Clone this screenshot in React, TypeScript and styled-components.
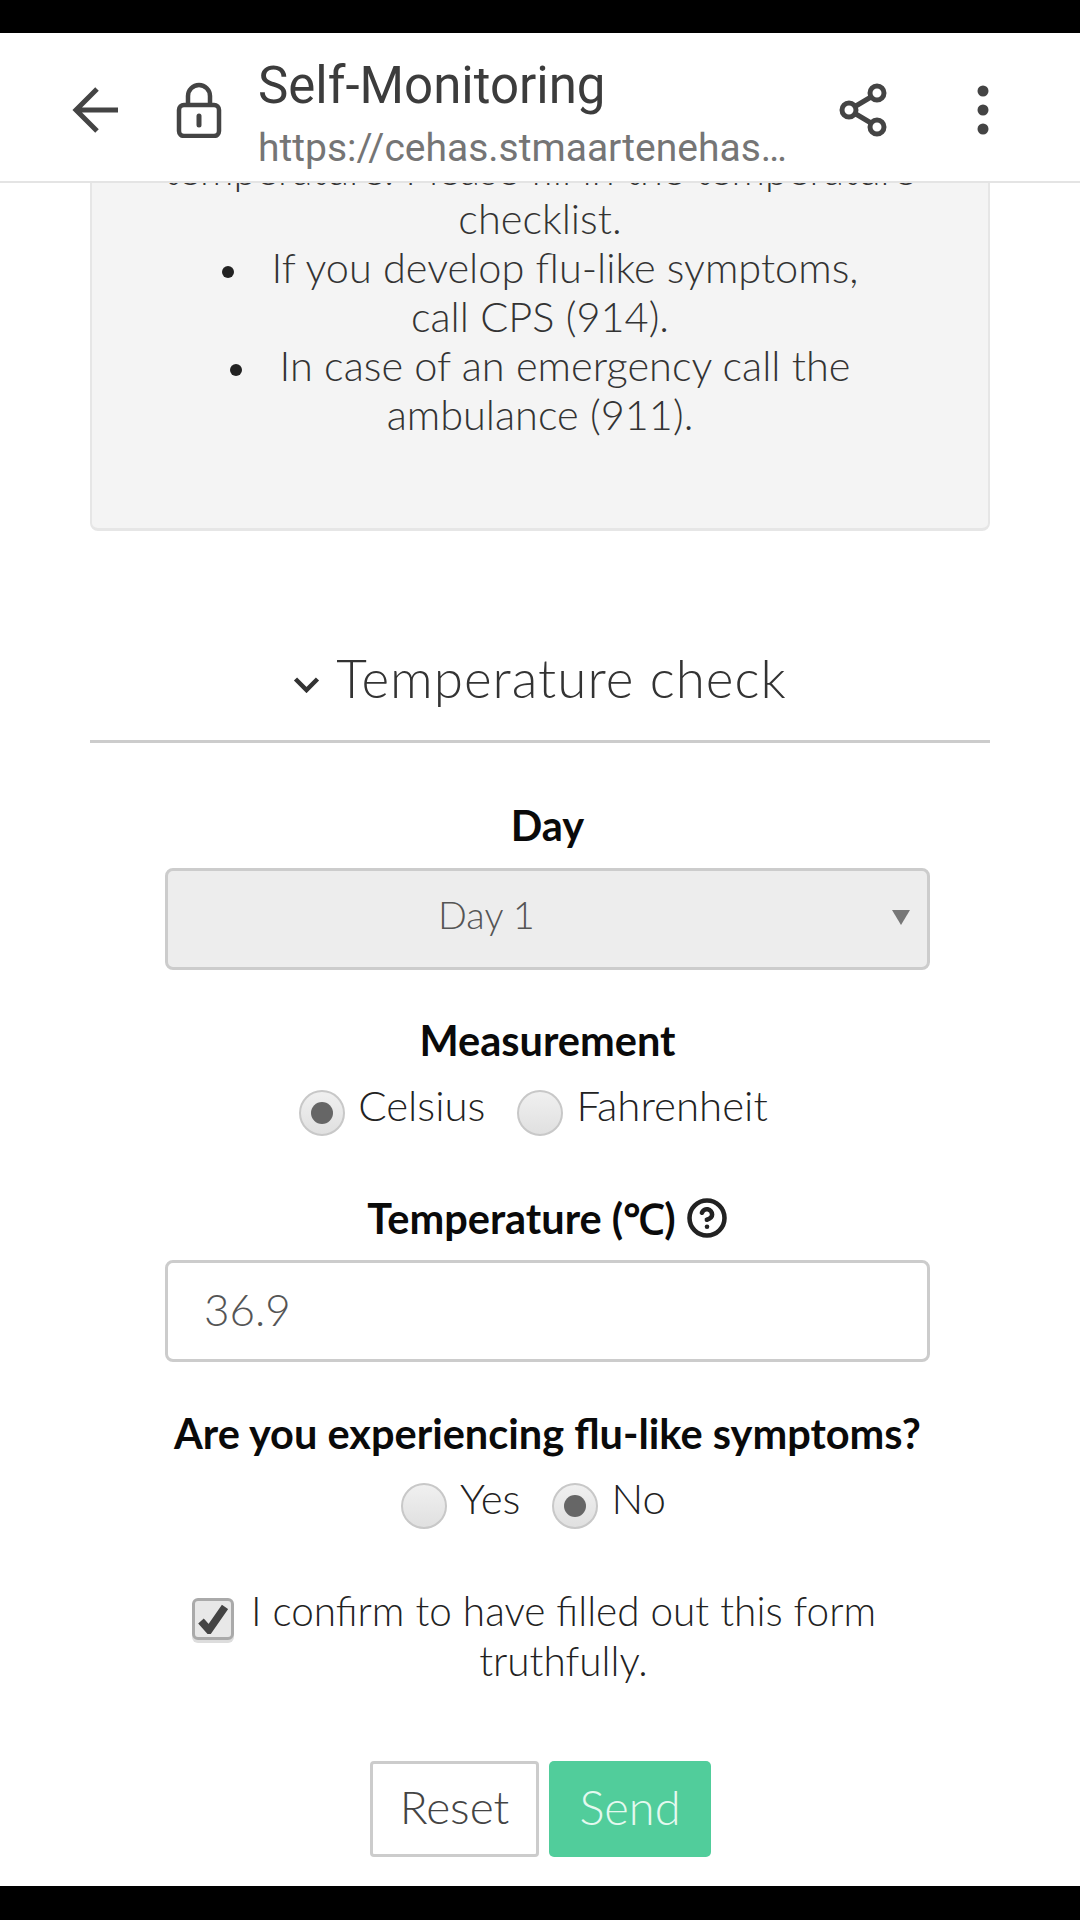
import React from 'react';
import styled, {createGlobalStyle} from 'styled-components';
import {CircleHelp} from 'lucide-react';

const GlobalStyle = createGlobalStyle`
  html, body {
    margin: 0;
    padding: 0;
    background: #000;
  }
  * {
    box-sizing: border-box;
  }
`

const Radio = ({checked, label}: { checked?: boolean; label: string }) => (
    <RadioItem>
        <RadioCircle>{checked && <RadioDot/>}</RadioCircle>
        <RadioText>{label}</RadioText>
    </RadioItem>
);

export const App = () => {
    return (
        <Screen>
            <GlobalStyle/>
            <Header>
                <HeaderIcon width="50" height="50" viewBox="0 0 50 50" $left={71}>
                    <path d="M47 25H6M26 4 5 25l21 21" fill="none" stroke="#444" strokeWidth="5"/>
                </HeaderIcon>
                <HeaderIcon width="46" height="56" viewBox="0 0 46 56" $left={55}>
                    <path d="M12 24V14a11 11 0 0 1 22 0v10" fill="none" stroke="#444" strokeWidth="4.5"/>
                    <rect x="3" y="23" width="40" height="31" rx="5" fill="none" stroke="#444" strokeWidth="4.5"/>
                    <path d="M23 34v9" stroke="#444" strokeWidth="5" strokeLinecap="round"/>
                </HeaderIcon>
                <HeaderText>
                    <PageTitle>Self-Monitoring</PageTitle>
                    <PageUrl>https://cehas.stmaartenehas…</PageUrl>
                </HeaderText>
                <HeaderIcon width="50" height="54" viewBox="0 0 50 54" $left={-1}>
                    <g fill="none" stroke="#444" strokeWidth="5">
                        <circle cx="38" cy="10" r="7"/>
                        <circle cx="10" cy="27" r="7"/>
                        <circle cx="38" cy="44" r="7"/>
                        <path d="M16 23.500 32 14M16 30.500 32 40"/>
                    </g>
                </HeaderIcon>
                <HeaderIcon width="12" height="50" viewBox="0 0 12 50" $left={88}>
                    <circle cx="6" cy="6" r="5.500" fill="#444"/>
                    <circle cx="6" cy="25" r="5.500" fill="#444"/>
                    <circle cx="6" cy="44" r="5.500" fill="#444"/>
                </HeaderIcon>
            </Header>
            <Content>
                <InfoCard>
                    <InfoText>temperature. Please fill in the temperature<br/>checklist.</InfoText>
                    <InfoList>
                        <li>If you develop flu-like symptoms,<br/>call CPS (914).</li>
                        <li>In case of an emergency call the<br/>ambulance (911).</li>
                    </InfoList>
                </InfoCard>
                <SectionTitle>
                    <svg width="27" height="17" viewBox="0 0 27 17">
                        <path d="M2.500 3 13.500 14 24.500 3" fill="none" stroke="#333" strokeWidth="4.500"/>
                    </svg>
                    Temperature check
                </SectionTitle>
                <Divider/>
                <Form>
                    <FieldLabel>Day</FieldLabel>
                    <SelectBox>Day 1<SelectArrow/></SelectBox>
                    <FieldLabel $top={47}>Measurement</FieldLabel>
                    <RadioRow>
                        <Radio checked label="Celsius"/>
                        <Radio label="Fahrenheit"/>
                    </RadioRow>
                    <FieldLabel $top={59}>
                        Temperature (℃)
                        <HelpIcon><CircleHelp size={42} strokeWidth={2.600} color="#222"/></HelpIcon>
                    </FieldLabel>
                    <TextBox>36.9</TextBox>
                    <FieldLabel $top={48}>Are you experiencing flu-like symptoms?</FieldLabel>
                    <RadioRow>
                        <Radio label="Yes"/>
                        <Radio checked label="No"/>
                    </RadioRow>
                    <ConfirmRow>
                        <CheckBox>
                            <svg width="30" height="30" viewBox="0 0 30 30">
                                <path d="M3 17l8 9L27 3" fill="none" stroke="#444" strokeWidth="7.500"/>
                            </svg>
                        </CheckBox>
                        <ConfirmText>I confirm to have filled out this form<br/>truthfully.</ConfirmText>
                    </ConfirmRow>
                    <ButtonRow>
                        <ResetButton>Reset</ResetButton>
                        <SendButton>Send</SendButton>
                    </ButtonRow>
                </Form>
            </Content>
        </Screen>
    );
};

export default App;

const Screen = styled.div`
  width: 1080px;
  height: 1920px;
  padding: 33px 0 34px;
  background: #000;
  display: flex;
  flex-direction: column;
  font-family: Lato, "Liberation Sans", sans-serif;
  overflow: hidden;
`

const Header = styled.header`
  height: 150px;
  flex: none;
  display: flex;
  align-items: center;
  background: #fff;
  border-bottom: 2px solid #e4e4e4;
  position: relative;
  z-index: 1;
  padding-top: 6px;
`

const HeaderIcon = styled.svg<{ $left: number }>`
  flex: none;
  margin-left: ${props => props.$left}px;
`

const HeaderText = styled.div`
  width: 582px;
  margin-left: 36px;
  font-family: Roboto, sans-serif;
`

const PageTitle = styled.div`
  font-size: 51px;
  line-height: 62px;
  color: #3c3c3c;
  margin-top: 12px;
`

const PageUrl = styled.div`
  font-size: 39px;
  line-height: 58px;
  margin-top: 2px;
  color: #757575;
  white-space: nowrap;
`

const Content = styled.main`
  flex: 1;
  background: #fff;
  overflow: hidden;
`

const InfoCard = styled.section`
  height: 389px;
  width: 900px;
  margin: -41px 90px 0;
  background: #f4f4f4;
  border: 2px solid #e6e6e6;
  border-bottom-width: 3px;
  border-radius: 8px;
  padding-top: 1px;
  font-size: 41.5px;
  font-weight: 300;
  line-height: 49px;
  color: #333;
  text-align: center;
`

const InfoText = styled.div`
`

const InfoList = styled.ul`
  list-style: none;
  margin: 0;
  padding: 0;

  li::before {
    content: "";
    display: inline-block;
    width: 12px;
    height: 12px;
    border-radius: 50%;
    background: #222;
    margin-right: 38px;
    vertical-align: 5px;
  }
`

const SectionTitle = styled.h2`
  margin: 121px 0 0;
  height: 54px;
  padding-bottom: 4px;
  display: flex;
  align-items: center;
  justify-content: center;
  gap: 16px;
  font-size: 53px;
  font-weight: 300;
  color: #333;
  letter-spacing: 1px;

  svg {
    margin-top: 14px;
  }
`

const Divider = styled.hr`
  margin: 34px 90px 0;
  border: 0;
  height: 3px;
  background: #ccc;
`

const Form = styled.form`
  width: 765px;
  margin: 0 0 0 165px;
  padding-top: 59px;
  display: flex;
  flex-direction: column;
  align-items: stretch;
`

const FieldLabel = styled.div<{ $top?: number }>`
  margin-top: ${props => props.$top || 0}px;
  height: 46px;
  display: flex;
  align-items: center;
  justify-content: center;
  font-size: 41.5px;
  font-weight: 700;
  color: #0a0a0a;
  white-space: nowrap;
`

const HelpIcon = styled.span`
  display: flex;
  margin-left: 10px;
`

const SelectBox = styled.div`
  margin-top: 20px;
  height: 102px;
  position: relative;
  display: flex;
  align-items: center;
  padding: 0 0 10px 270px;
  background: #ededed;
  border: 3px solid #ccc;
  border-radius: 8px;
  font-size: 38px;
  font-weight: 300;
  color: #555;
`

const SelectArrow = styled.span`
  position: absolute;
  right: 17px;
  top: 39px;
  width: 0;
  height: 0;
  border-left: 9px solid transparent;
  border-right: 9px solid transparent;
  border-top: 15px solid #777;
`

const TextBox = styled.div`
  margin-top: 19px;
  height: 102px;
  display: flex;
  align-items: center;
  padding: 0 0 4px 36px;
  background: #fff;
  border: 3px solid #ccc;
  border-radius: 8px;
  font-size: 44px;
  font-weight: 300;
  color: #555;
`

const RadioRow = styled.div`
  display: flex;
  justify-content: center;
  gap: 32px;
  margin-top: 19px;
  padding-right: 28px;
  height: 54px;
`

const RadioItem = styled.label`
  display: flex;
  align-items: flex-start;
  gap: 13px;
`

const RadioCircle = styled.span`
  width: 46px;
  height: 46px;
  margin-top: 8px;
  border-radius: 50%;
  border: 2px solid #c8c8c8;
  background: linear-gradient(#f0f0f0, #e0e0e0);
  display: flex;
  align-items: center;
  justify-content: center;
`

const RadioDot = styled.span`
  width: 22px;
  height: 22px;
  border-radius: 50%;
  background: #666;
`

const RadioText = styled.span`
  font-size: 42px;
  font-weight: 300;
  line-height: 46px;
  color: #222;
`

const ConfirmRow = styled.label`
  display: flex;
  align-items: flex-start;
  gap: 16px;
  margin: 57px 0 0 27px;
  width: 685px;
`

const CheckBox = styled.span`
  flex: none;
  width: 42px;
  height: 42px;
  margin-top: 12px;
  display: flex;
  align-items: center;
  justify-content: center;
  background: #e8e8e8;
  border: 3px solid #aaa;
  border-radius: 6px;
  box-shadow: 0 3px 0 #ddd;
`

const ConfirmText = styled.span`
  flex: 1;
  font-size: 40.5px;
  font-weight: 300;
  line-height: 50px;
  color: #222;
  text-align: center;
  white-space: nowrap;
`

const ButtonRow = styled.div`
  display: flex;
  gap: 10px;
  margin: 75px 0 0 205px;
`

const ResetButton = styled.button`
  width: 169px;
  height: 96px;
  padding-bottom: 6px;
  background: #fff;
  border: 3px solid #ccc;
  border-radius: 4px;
  font-family: inherit;
  font-size: 46px;
  font-weight: 300;
  color: #444;
`

const SendButton = styled.button`
  width: 162px;
  height: 96px;
  padding-bottom: 6px;
  background: #51cd9b;
  border: 0;
  border-radius: 5px;
  font-family: inherit;
  font-size: 47px;
  font-weight: 300;
  color: #e4f9ef;
`
